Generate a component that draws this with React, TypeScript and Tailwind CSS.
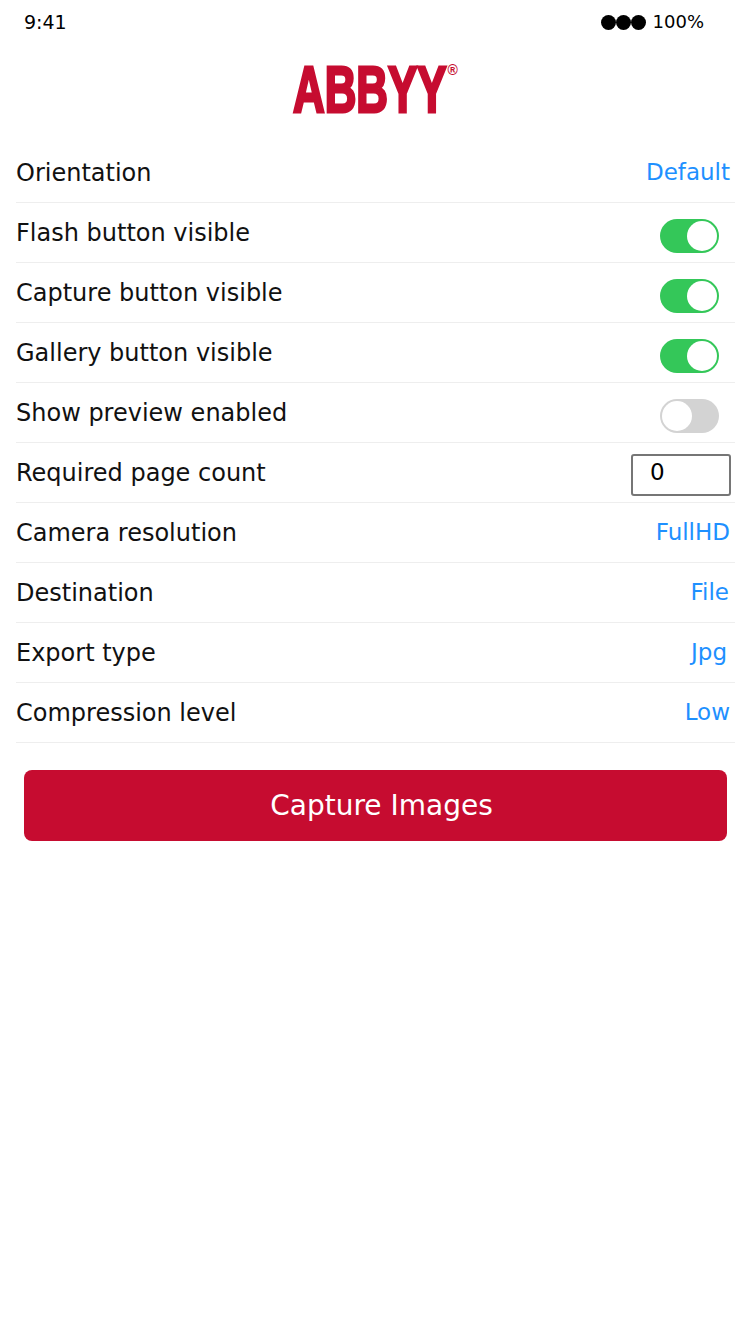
import React from "react";

type Row =
  | { label: string; kind: "value"; value: string; pad: string }
  | { label: string; kind: "toggle"; on: boolean }
  | { label: string; kind: "count"; count: number };

const rows: Row[] = [
  { label: "Orientation", kind: "value", value: "Default", pad: "pr-[5px]" },
  { label: "Flash button visible", kind: "toggle", on: true },
  { label: "Capture button visible", kind: "toggle", on: true },
  { label: "Gallery button visible", kind: "toggle", on: true },
  { label: "Show preview enabled", kind: "toggle", on: false },
  { label: "Required page count", kind: "count", count: 0 },
  { label: "Camera resolution", kind: "value", value: "FullHD", pad: "pr-[5px]" },
  { label: "Destination", kind: "value", value: "File", pad: "pr-[6px]" },
  { label: "Export type", kind: "value", value: "Jpg", pad: "pr-[8px]" },
  { label: "Compression level", kind: "value", value: "Low", pad: "pr-[5px]" },
];

function Toggle({ on }: { on: boolean }) {
  return (
    <div
      className={
        on
          ? "relative mt-[6px] mr-4 h-[34px] w-[59px] rounded-full bg-[#34c759]"
          : "relative mt-[6px] mr-4 h-[34px] w-[59px] rounded-full bg-[#d3d3d3]"
      }
    >
      <div
        className={
          on
            ? "absolute top-[2px] right-[2px] h-[30px] w-[30px] rounded-full bg-white"
            : "absolute top-[2px] left-[2px] h-[30px] w-[30px] rounded-full bg-white"
        }
      />
    </div>
  );
}

function Logo() {
  return (
    <svg width="240" height="80" viewBox="0 0 240 80" aria-label="ABBYY">
      <g transform="translate(1 60) scale(0.675 1)">
        <text
          fontFamily="'Liberation Sans', sans-serif"
          fontWeight="700"
          fontSize="65"
          fill="#c60c30"
          stroke="#c60c30"
          strokeWidth="3"
        >
          ABBYY
        </text>
      </g>
      <text
        x="155.5"
        y="23"
        fontFamily="'Liberation Sans', sans-serif"
        fontWeight="700"
        fontSize="14"
        fill="#c60c30"
      >
        ®
      </text>
    </svg>
  );
}

export default function App() {
  return (
    <div className="min-h-[1334px] bg-white font-['DejaVu_Sans',sans-serif]">
      {/* status bar */}
      <div className="flex h-[44px] items-center justify-between pr-[46px] pl-6 text-black">
        <span className="text-[19px]">9:41</span>
        <span className="flex items-center gap-[7px] text-[18px] leading-[24px]">
          <span className="flex items-center pt-px">
            <span className="h-[15px] w-[15px] rounded-full bg-black" />
            <span className="h-[15px] w-[15px] rounded-full bg-black" />
            <span className="h-[15px] w-[15px] rounded-full bg-black" />
          </span>
          100%
        </span>
      </div>

      <div className="h-[99px] pt-2 pl-[292px]">
        <Logo />
      </div>

      <div className="ml-4 mr-[15px]">
        {rows.map((row) => (
          <div
            key={row.label}
            className="flex h-[60px] items-center justify-between border-b border-[#eeeeee]"
          >
            <span className="text-[24px] text-[#111111]">{row.label}</span>
            {row.kind === "value" && (
              <span className={`${row.pad} text-[23px] text-[#1e90ff]`}>{row.value}</span>
            )}
            {row.kind === "toggle" && <Toggle on={row.on} />}
            {row.kind === "count" && (
              <input
                readOnly
                value={row.count}
                className="mt-[5px] mr-[4px] h-[42px] w-[100px] rounded-[3px] border-2 border-[#767676] pb-[7px] pl-[17px] text-[23px] text-black outline-none"
              />
            )}
          </div>
        ))}
      </div>

      <div className="px-6 pt-[27px] pr-[23px]">
        <button className="h-[71px] w-full rounded-[8px] bg-[#c60c30] pl-3 text-[28px] text-white">
          Capture Images
        </button>
      </div>
    </div>
  );
}
